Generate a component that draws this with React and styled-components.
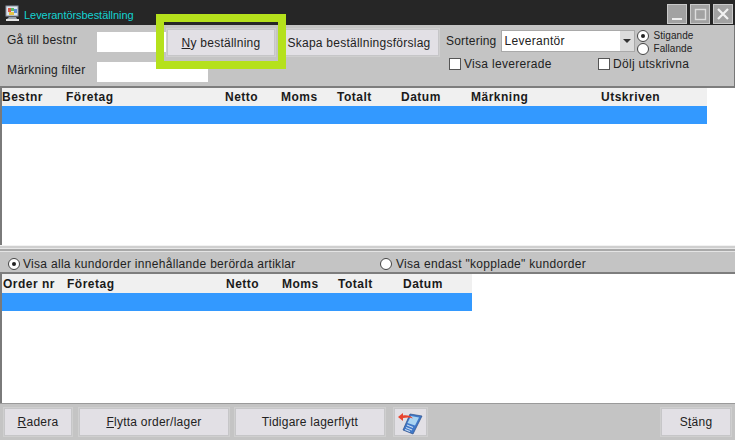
import React from "react";
import styled, { createGlobalStyle } from "styled-components";

const Global = createGlobalStyle`
  html, body { margin: 0; padding: 0; background: #c4c4c4; }
  #root { width: 735px; height: 440px; overflow: hidden; }
  * { box-sizing: border-box; }
`;
const Win = styled.div`
  position: relative; width: 735px; height: 440px; display: flex; flex-direction: column;
  background: #c4c4c4; font: 12px "Liberation Sans", Arial, sans-serif; color: #222;
`;
const TitleBar = styled.div`
  height: 25px; flex: none; background: #262626; display: flex; align-items: center;
  padding: 4px 2px 1px 4px;
`;
const Title = styled.span`
  margin-left: 3px; color: #14d2d2; font-size: 11px; flex: 1; margin-top: 2px; letter-spacing: -0.05px;
`;
const WinBtn = styled.div`
  width: 20px; height: 20px; margin-left: 3px; background: #a2a2a2; border: 1px solid #c9c9c9;
  display: flex; align-items: center; justify-content: center;
`;
const Toolbar = styled.div`
  height: 63px; flex: none; display: grid; padding: 3px 0 0 7px;
  grid-template-columns: 90px 69px 110px 2px 162px 1fr; grid-template-rows: 29px 30px;
  border-bottom: 2px solid #7d7d7d; border-right: 1px solid #777;
`;
const Label = styled.div`
  display: flex; align-items: flex-start; padding-top: ${p => p.$pt}px; letter-spacing: 0.2px; white-space: nowrap;
`;
const FilterLabel = styled(Label)` grid-column: 1; grid-row: 2; `;
const TextBox = styled.div`
  background: #fff; height: 20px; width: ${p => p.$w}px; align-self: center;
`;
const FirstBox = styled(TextBox)` align-self: start; margin-top: 4px; grid-column: 2; grid-row: 1; `;
const FilterBox = styled(TextBox)` grid-column: 2 / 4; grid-row: 2; `;
const Btn = styled.div`
  height: ${p => p.$h || 29}px; width: ${p => p.$w ? p.$w + "px" : "auto"};
  background: #e2e0e5; border: 1px solid #cfcfcf; outline: 1px solid #c6c6c8; outline-offset: -2px;
  display: flex; align-items: center; justify-content: center; letter-spacing: 0.25px; white-space: nowrap; flex: none;
`;
const Wide = styled(Btn)` grid-column: 5; grid-row: 1; `;
const Highlight = styled.div`
  position: absolute; left: 156px; top: 14px; width: 130px; height: 55px;
  border: 8px solid #b5e11c; pointer-events: none;
`;
const Right = styled.div`
  grid-column: 6; grid-row: 1 / 3; padding: 2px 0 0 6px; display: flex; flex-direction: column;
`;
const SortRow = styled.div` display: flex; align-items: flex-start; `;
const Select = styled.div`
  width: 134px; height: 22px; margin-left: 4px; background: #fff; border: 1px solid #a9a9a9;
  display: flex; align-items: center; padding-left: 3px; letter-spacing: 0.3px;
`;
const SelText = styled.span` flex: 1; `;
const Arrow = styled.div`
  width: 14px; height: 20px; background: #dcdcdc; display: flex; align-items: center; justify-content: center;
  &::after { content: ""; border: 4px solid transparent; border-top: 4px solid #333; border-bottom: 0; }
`;
const RadioStack = styled.div` display: flex; flex-direction: column; margin-left: 2px; margin-top: -1px; `;
const SmallRadio = styled.div`
  display: flex; align-items: center; height: 13px; font-size: 10px; gap: 5px; letter-spacing: 0.05px;
`;
const RadioDot = styled.span`
  width: 12px; height: 12px; border-radius: 50%; background: #fff; border: 1px solid #444; flex: none;
  display: flex; align-items: center; justify-content: center;
  &::after { content: ""; width: 4px; height: 4px; border-radius: 50%; background: ${p => p.$on ? "#222" : "transparent"}; }
`;
const CheckRow = styled.div` display: flex; margin-top: 2px; padding-left: 3px; `;
const Check = styled.div`
  display: flex; align-items: center; gap: 3px; width: ${p => p.$w}px; letter-spacing: 0.3px;
`;
const Box = styled.span` width: 12px; height: 12px; background: #fff; border: 1px solid #555; flex: none; `;
const TableArea = styled.div`
  flex: ${p => p.$h ? "none" : 1}; height: ${p => p.$h}px; background: #fff; border-left: 2px solid #7a7a7a;
`;
const Head = styled.div`
  height: ${p => p.$rowH || 18}px; width: ${p => p.$w}px; background: #f0f0f0; display: grid;
  grid-template-columns: ${p => p.$cols}; align-items: center; font-weight: bold; letter-spacing: 0.5px;
  color: #1a1a1a; white-space: nowrap; padding-left: ${p => p.$pad || 0}px;
`;
const Selected = styled.div`
  height: 18px; width: ${p => p.$w}px; background: #3399ff;
`;
const Splitter = styled.div`
  height: 10px; flex: none; background: linear-gradient(#f2f2f2 0 1px, #cfcfcf 1px 3px, #e8e8e8 3px 4px, #a9a9a9 4px 6px, #e4e4e4 6px 7px, #c4c4c4 7px 10px);
`;
const FilterBar = styled.div`
  height: 19px; flex: none; display: flex; align-items: center; padding-left: 8px;
  border-bottom: 2px solid #7d7d7d; letter-spacing: 0.3px;
`;
const RadioOpt = styled.div` display: flex; align-items: center; gap: ${p => p.$gap || 3}px; width: ${p => p.$w}px; flex: none; `;
const Footer = styled.div`
  height: 37px; flex: none; display: flex; align-items: flex-start; padding: 3px 3px 0 3px; border-top: 1px solid #9a9a9a;
`;
const Gap = styled.div` width: ${p => p.$w}px; flex: none; `;
const Spacer = styled.div` flex: 1; `;

const PC1 = "64px 159px 56px 56px 64px 70px 130px 105px";
const PC2 = "64px 159px 56px 56px 65px 1fr";

const AppIcon = () => (
  <svg width="17" height="18" viewBox="0 0 17 18">
    <rect x="2" y="1" width="12" height="10" fill="#dfe6ee" stroke="#8a93a3" />
    <rect x="4" y="3" width="3" height="4" fill="#d9584a" />
    <rect x="7" y="3" width="3" height="3" fill="#59b96a" />
    <rect x="10" y="4" width="3" height="4" fill="#5a8fd8" />
    <rect x="5" y="7" width="5" height="3" fill="#e7c548" />
    <path d="M5 12h7l1 2H3z" fill="#9aa2ad" />
    <rect x="2" y="14" width="13" height="2" fill="#e4e4e4" />
  </svg>
);
const PhoneIcon = () => (
  <svg width="26" height="26" viewBox="0 0 26 26">
    <path d="M12 5l12 2-9 18-10-4z" fill="#3f78c8" stroke="#2b4f8a" strokeWidth="0.7" />
    <path d="M13 7l8 1.4-4 8-7.5-2.4z" fill="#a9d4f2" />
    <path d="M9 16l6 2.4M8 18.5l6 2.4M7 20.5l5 2" stroke="#c9dbf1" strokeWidth="1.1" />
    <path d="M0 8l5-4v2.4c4-.6 8 .2 10 3-3-1-6-1-10-.3V12z" fill="#e8452f" />
  </svg>
);
const Radio = ({ on }) => <RadioDot $on={on} />;

export default function App() {
  return (
    <Win>
      <Global />
      <TitleBar>
        <AppIcon />
        <Title>Leverantörsbeställning</Title>
        <WinBtn>
          <svg width="14" height="14" viewBox="0 0 14 14"><rect x="2" y="11" width="10" height="2" fill="#eee" /></svg>
        </WinBtn>
        <WinBtn>
          <svg width="14" height="14" viewBox="0 0 14 14"><rect x="2.5" y="2.5" width="10" height="10" fill="none" stroke="#ddd" strokeWidth="1.4" /></svg>
        </WinBtn>
        <WinBtn>
          <svg width="14" height="14" viewBox="0 0 14 14"><path d="M2 2l10 10M12 2L2 12" stroke="#f2f2f2" strokeWidth="2.2" /></svg>
        </WinBtn>
      </TitleBar>
      <Toolbar>
        <Label $pt={5}>Gå till bestnr</Label>
        <FirstBox $w={69} />
        <Btn $w={110}><span><u>N</u>y beställning</span></Btn>
        <Wide>Skapa beställningsförslag</Wide>
        <Right>
          <SortRow>
            <Label $pt={4}>Sortering</Label>
            <Select><SelText>Leverantör</SelText><Arrow /></Select>
            <RadioStack>
              <SmallRadio><Radio on />Stigande</SmallRadio>
              <SmallRadio><Radio />Fallande</SmallRadio>
            </RadioStack>
          </SortRow>
          <CheckRow>
            <Check $w={149}><Box />Visa levererade</Check>
            <Check $w={110}><Box />Dölj utskrivna</Check>
          </CheckRow>
        </Right>
        <FilterLabel $pt={6}>Märkning filter</FilterLabel>
        <FilterBox $w={111} />
      </Toolbar>
      <TableArea $h={157}>
        <Head $w={705} $cols={PC1}>
          <span>Bestnr</span><span>Företag</span><span>Netto</span><span>Moms</span><span>Totalt</span><span>Datum</span><span>Märkning</span><span>Utskriven</span>
        </Head>
        <Selected $w={705} />
      </TableArea>
      <Splitter />
      <FilterBar>
        <RadioOpt $w={372}><Radio on />Visa alla kundorder innehållande berörda artiklar</RadioOpt>
        <RadioOpt $gap={4}><Radio />Visa endast "kopplade" kundorder</RadioOpt>
      </FilterBar>
      <TableArea>
        <Head $w={470} $cols={PC2} $pad={1} $rowH={19}>
          <span>Order nr</span><span>Företag</span><span>Netto</span><span>Moms</span><span>Totalt</span><span>Datum</span>
        </Head>
        <Selected $w={470} />
      </TableArea>
      <Footer>
        <Btn $w={70} $h={30}><span><u>R</u>adera</span></Btn>
        <Gap $w={5} />
        <Btn $w={152} $h={30}><span><u>F</u>lytta order/lager</span></Btn>
        <Gap $w={4} />
        <Btn $w={152} $h={30}>Tidigare lagerflytt</Btn>
        <Gap $w={7} />
        <Btn $w={35} $h={30}><PhoneIcon /></Btn>
        <Spacer />
        <Btn $w={72} $h={30}><span>S<u>t</u>äng</span></Btn>
      </Footer>
      <Highlight />
    </Win>
  );
}
